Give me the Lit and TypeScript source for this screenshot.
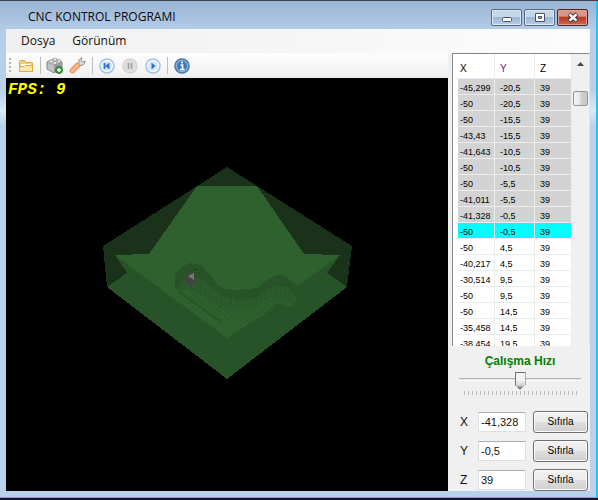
import { LitElement, html, css, svg } from "lit";
import { customElement, property } from "lit/decorators.js";
import { classMap } from "lit/directives/class-map.js";

const rows: [string, string, string][] = [
  ["-45,299", "-20,5", "39"],
  ["-50", "-20,5", "39"],
  ["-50", "-15,5", "39"],
  ["-43,43", "-15,5", "39"],
  ["-41,643", "-10,5", "39"],
  ["-50", "-10,5", "39"],
  ["-50", "-5,5", "39"],
  ["-41,011", "-5,5", "39"],
  ["-41,328", "-0,5", "39"],
  ["-50", "-0,5", "39"],
  ["-50", "4,5", "39"],
  ["-40,217", "4,5", "39"],
  ["-30,514", "9,5", "39"],
  ["-50", "9,5", "39"],
  ["-50", "14,5", "39"],
  ["-35,458", "14,5", "39"],
  ["-38,454", "19,5", "39"],
];
const activeRow = 9;

@customElement("title-bar")
class TitleBar extends LitElement {
  static styles = css`
    :host {
      display: flex;
      align-items: flex-start;
      height: 28px;
      padding: 0 8px 0 28px;
      box-sizing: border-box;
      font: 12px/16px "Open Sans", "Noto Sans", sans-serif;
      color: #0a0a14;
    }
    .title { flex: 1; margin: 0; padding-top: 8px; font: inherit; white-space: nowrap; }
    .buttons { display: flex; gap: 2px; padding-top: 8px; }
    button {
      width: 31px;
      height: 17px;
      padding: 0;
      box-sizing: border-box;
      border: 1px solid #566b87;
      border-radius: 2px;
      box-shadow: inset 0 0 0 1px #dbe7f5;
      background: linear-gradient(#c6d7ea 0 45%, #9db6d3 50%, #b5cde8);
      display: flex;
      align-items: center;
      justify-content: center;
    }
    .close {
      border-color: #55211f;
      box-shadow: inset 0 0 0 1px #dc9f94;
      background: linear-gradient(#d99689 0 40%, #b83a23 50%, #cb6a50);
    }
  `;
  render() {
    return html`
      <h1 class="title">CNC KONTROL PROGRAMI</h1>
      <div class="buttons">
        <button aria-label="Minimize">
          <svg width="14" height="11"><rect x="2.500" y="5.500" width="9" height="4" rx="1" fill="#fff" stroke="#4d5260" /></svg>
        </button>
        <button aria-label="Maximize">
          <svg width="14" height="11"><path d="M2.500 1.500h9v8h-9z" fill="#fff" stroke="#4d5260" /><path d="M5.500 4.500h3v2h-3z" fill="#9db6d3" stroke="#4d5260" /></svg>
        </button>
        <button class="close" aria-label="Close">
          <svg width="14" height="11"><path d="M3 2l8 7M11 2l-8 7" stroke="#4a3a45" stroke-width="4.500" /><path d="M3.500 2.400l7 6.200M10.500 2.400l-7 6.200" stroke="#fff" stroke-width="2.400" /></svg>
        </button>
      </div>
    `;
  }
}

@customElement("tool-bar")
class ToolBar extends LitElement {
  static styles = css`
    :host {
      display: flex;
      align-items: center;
      height: 25px;
      padding-left: 3px;
      box-sizing: border-box;
      background: linear-gradient(#fdfdfd, #f3f3f3 80%, #ececec);
    }
    button { width: 23px; height: 22px; padding: 0; border: 0; background: none; display: flex; align-items: center; justify-content: center; }
    .grip { width: 2px; height: 15px; margin-right: 3px; background: repeating-linear-gradient(#b4b4b4 0 2px, transparent 2px 4px); }
    .sep { width: 1px; height: 17px; margin: 0 2px 0 3px; background: #bdbdbd; }
  `;
  private round(edge: string, ring: string, core: string, inner: unknown) {
    return html`<svg width="16" height="16" viewBox="0 0 16 16">
      <circle cx="8" cy="8" r="7" fill=${ring} stroke=${edge} stroke-width="1.600" />
      <circle cx="8" cy="8" r="5" fill=${core} />
      ${inner}
    </svg>`;
  }
  render() {
    return html`
      <span class="grip"></span>
      <button aria-label="Open">
        <svg width="16" height="16" viewBox="0 0 16 16">
          <path d="M1.500 13.500v-10q0-1 1-1h4l1.500 2h5.500q1 0 1 1v8z" fill="#f4cf7c" stroke="#d9a441" />
          <path d="M3 6h9.500v3H3z" fill="#fff" />
          <path d="M1.500 13.500v-5h5l1-1h7v6z" fill="#fbe6a8" stroke="#dfac4c" />
        </svg>
      </button>
      <span class="sep"></span>
      <button aria-label="Add part">
        <svg width="18" height="18" viewBox="0 0 18 18">
          <path d="M1 5l7-3 8 3v6l-8 5-7-4z" fill="#c2c2c2" stroke="#858585" />
          <path d="M1 5l7 3 8-3-8-3z" fill="#e4e4e4" stroke="#8a8a8a" stroke-width=".6" />
          <path d="M8 8l8-3v6l-8 5z" fill="#9c9c9c" />
          <g fill="#eee" stroke="#858585" stroke-width=".7"><ellipse cx="5" cy="4.500" rx="2" ry="1.500" /><ellipse cx="9" cy="2.500" rx="2" ry="1.500" /><ellipse cx="9" cy="6" rx="2" ry="1.500" /><ellipse cx="13" cy="4" rx="2" ry="1.500" /></g>
          <circle cx="13" cy="13" r="3.500" fill="#37953c" stroke="#2b7a33" />
          <path d="M13 11v4M11 13h4" stroke="#fff" stroke-width="1.400" />
        </svg>
      </button>
      <button aria-label="Settings">
        <svg width="17" height="17" viewBox="0 0 17 17">
          <path d="M8 8l2-2.500Q9 2 13 .8l-1 3L13.500 5l2.500-1q0 4.500-5 4.500L9.500 10z" fill="#dedede" stroke="#858585" stroke-width=".9" />
          <path d="M3.500 13.500l5-5" stroke="#ea8a52" stroke-width="5.500" stroke-linecap="round" />
          <path d="M3.500 13.500l5-5" stroke="#ffb48a" stroke-width="3.800" stroke-linecap="round" />
        </svg>
      </button>
      <span class="sep"></span>
      <button aria-label="Rewind">
        ${this.round("#a3c1e6", "#f7fbff", "#d8e7f8", svg`<path d="M5.500 5v6" stroke="#2f74c2" stroke-width="1.800" /><path d="M6 8l4.500-3.500v7z" fill="#2f74c2" />`)}
      </button>
      <button aria-label="Pause">
        ${this.round("#d4d4d4", "#e2e2e2", "#dcdcdc", svg`<path d="M6.500 5v6M9.500 5v6" stroke="#a2a2a2" stroke-width="1.600" />`)}
      </button>
      <button aria-label="Play">
        ${this.round("#a3c1e6", "#f7fbff", "#d8e7f8", svg`<path d="M6.500 4.500L10.500 8l-4 3.500z" fill="#2f74c2" />`)}
      </button>
      <span class="sep"></span>
      <button aria-label="Info">
        ${this.round("#4a78b0", "#8fb3dc", "#3f78ba", svg`<path d="M8 3.500v2M6.500 7H8.500v4M6 11.500h4.500" stroke="#fff" stroke-width="1.700" fill="none" />`)}
      </button>
    `;
  }
}

@customElement("work-view")
class WorkView extends LitElement {
  static styles = css`
    :host { display: block; position: relative; background: #000; overflow: hidden; }
    .fps {
      position: absolute;
      left: 2px;
      top: 3px;
      font: italic bold 16px/18px "Liberation Mono", "DejaVu Sans Mono", monospace;
      color: #ff0;
      white-space: pre;
    }
    .scene { display: block; margin: 0 auto; }
  `;
  render() {
    return html`
      <span class="fps">FPS: 9</span>
      <svg class="scene" width="442" height="413" viewBox="6 78 442 413" shape-rendering="crispEdges">
        <defs>
          <pattern id="sparse" width="7" height="6" patternUnits="userSpaceOnUse">
            <path d="M1 0h1v1h-1zM4 1h2v1h-2zM2 2h1v1h-1zM6 3h1v1h-1zM0 4h1v1h-1zM3 5h1v1h-1z" fill="#285228" />
          </pattern>
          <pattern id="dense" width="5" height="4" patternUnits="userSpaceOnUse">
            <path d="M0 0h1v1h-1zM2 0h2v1h-2zM1 1h1v1h-1zM4 1h1v1h-1zM0 2h2v1h-2zM3 2h1v1h-1zM1 3h1v1h-1zM4 3h1v1h-1z" fill="#285228" />
          </pattern>
        </defs>
        <path d="M227 167L352 246L347 287L107 287L103 246z" fill="#1a3219" />
        <path d="M107 287L127 273L115 255H340L327 273L347 287L227 379z" fill="#285228" />
        <path d="M197 186H257L304 254L340 255L227 338L115 255L149 254z" fill="#2f612f" />
        <path d="M175 288V274L182 267L190 263L200 265L211 275L217 285L225 289L237 290L257 288L266 281L276 275H283L298 286L227 338L223 325L178 291z" fill="#285228" />
        <path d="M178 287L184 280L196 277L206 281L213 290L226 297L240 300L256 298L266 292L276 286L286 287L297 297L295 303L290 307L282 304L276 304L262 316L247 325L227 338L217 331L222 323L178 291z" fill="#2f612f" />
        <path d="M178 287L184 280L196 277L206 281L213 290L226 297L240 300L256 298L266 292L276 286L286 287L297 297L294 304L270 297L256 308L236 309L220 308L204 296L190 289L179 291z" fill="url(#dense)" />
        <path d="M190 289L204 296L220 308L236 309L256 308L270 297L294 304L290 307L276 304L248 325L224 322L190 299z" fill="url(#sparse)" />
        <path d="M178 291L222 323" stroke="#285228" stroke-width="2" />
        <path d="M189 273L194 273L195 284L190 286L186 282z" fill="#454145" />
        <path d="M188 276L194 273V280z" fill="#777477" />
        <path d="M195 269h1v1h-1z" fill="#000" />
      </svg>
    `;
  }
}

@customElement("point-list")
class PointList extends LitElement {
  static styles = css`
    :host {
      display: flex;
      height: 293px;
      box-sizing: border-box;
      overflow: hidden;
      border: 1px solid #828790;
      border-right-color: #e3e3e3;
      border-bottom: 0;
      background: #fff;
      font: 9px/12px "Liberation Sans", Arial, sans-serif;
      color: #000;
    }
    table { flex: 1; border-collapse: separate; border-spacing: 0; table-layout: fixed; align-self: flex-start; margin-left: 2px; }
    th, td { padding: 3px 0 0 5px; border: 0 solid #ececec; border-width: 0 1px 1px 0; text-align: left; font-weight: normal; white-space: nowrap; }
    th { height: 25px; padding-top: 5px; box-sizing: border-box; font-size: 10px; line-height: 18px; }
    .y { color: #7a2082; }
    .edge { width: 3px; padding: 0; border-right: 0; }
    .x { width: 37px; padding-left: 2px; }
    .mid { width: 40px; }
    .x, .mid { box-sizing: border-box; }
    .done { background: #d3d3d3; }
    .active { background: #0ff; }
    .scroll { width: 17px; display: flex; flex-direction: column; align-items: center; background: #f0f0f0; }
    .up { width: 17px; height: 20px; padding: 0; border: 0; background: none; display: flex; align-items: center; justify-content: center; }
    .thumb { width: 15px; height: 15px; margin-top: 17px; box-sizing: border-box; border: 1px solid #969696; border-radius: 2px; background: linear-gradient(90deg, #f5f5f5, #e6e6e6 45%, #cfcfcf 55%, #c6c6c9); }
  `;
  render() {
    return html`
      <table>
        <thead>
          <tr><th class="edge"></th><th class="x">X</th><th class="y mid">Y</th><th>Z</th></tr>
        </thead>
        <tbody>
          ${rows.map((r, i) => {
            const c = { done: i < activeRow, active: i === activeRow };
            return html`<tr>
              <td class="edge"></td>
              <td class=${classMap({ ...c, x: true })}>${r[0]}</td>
              <td class=${classMap({ ...c, mid: true })}>${r[1]}</td>
              <td class=${classMap(c)}>${r[2]}</td>
            </tr>`;
          })}
        </tbody>
      </table>
      <div class="scroll">
        <button class="up" aria-label="Scroll up"><svg width="7" height="4"><path d="M0 4L3.500 0L7 4z" fill="#444" /></svg></button>
        <div class="thumb"></div>
      </div>
    `;
  }
}

@customElement("axis-field")
class AxisField extends LitElement {
  @property() axis = "X";
  @property() value = "";
  static styles = css`
    :host { display: flex; align-items: center; height: 29px; font: 12px/16px "Liberation Sans", Arial, sans-serif; color: #111; }
    label { width: 18px; }
    input { width: 48px; height: 20px; box-sizing: border-box; padding: 0 2px; border: 1px solid #dcdfe6; border-top-color: #abadb3; border-radius: 1px; background: #fff; font-family: inherit; font-size: 11px; color: inherit; outline: 0; }
    button {
      width: 55px;
      height: 22px;
      margin-left: 7px;
      padding: 0;
      box-sizing: border-box;
      border: 1px solid #707070;
      border-radius: 3px;
      box-shadow: inset 0 0 0 1px #fafafa;
      background: linear-gradient(#f2f2f2, #ebebeb 48%, #dddddd 52%, #cfcfcf);
      font: 10px/14px "Liberation Sans", Arial, sans-serif;
      color: #000;
    }
  `;
  render() {
    return html`
      <label for="v">${this.axis}</label>
      <input id="v" .value=${this.value} />
      <button>Sıfırla</button>
    `;
  }
}

@customElement("app-root")
class AppRoot extends LitElement {
  static styles = css`
    :host {
      display: flex;
      flex-direction: column;
      height: 100vh;
      box-sizing: border-box;
      overflow: hidden;
      border-top: 1px solid #3a4654;
      border-bottom: 2px solid #0b1a20;
      background: #b9d1ea;
    }
    .window {
      flex: 1;
      min-height: 0;
      display: flex;
      flex-direction: column;
      border-right: 2px solid #21c3e6;
      border-bottom: 1px solid #35c6dc;
      background: linear-gradient(#99b4d3, #b5cde8 30px, #b9d1ea 90px, #dce9f6 110px, #b9d1ea 125px);
    }
    .client { flex: 1; min-height: 0; margin: 0 6px 6px; display: flex; flex-direction: column; background: #f0f0f0; }
    .menu {
      display: flex;
      gap: 17px;
      height: 24px;
      padding-left: 15px;
      background: linear-gradient(90deg, #f0f0f0, #fcfcfc);
      font: 12px/24px "Open Sans", "Noto Sans", sans-serif;
    }
    .menu a { color: #111; text-decoration: none; }
    .body { flex: 1; min-height: 0; display: flex; }
    .left { flex: 1; min-width: 0; display: flex; flex-direction: column; }
    work-view { flex: 1; }
    .side { width: 142px; display: flex; flex-direction: column; overflow: hidden; }
    point-list { margin-left: 4px; flex: none; }
    .speed { display: flex; flex-direction: column; align-items: center; height: 61px; padding: 7px 0 0 2px; box-sizing: border-box; flex: none; }
    .speed label { font: bold 12px/16px "Liberation Sans", Arial, sans-serif; color: #008000; }
    .speed input { appearance: none; width: 122px; height: 19px; margin: 2px 0 0; background: linear-gradient(#b0b0b0, #b0b0b0) 0 7px / 100% 1px no-repeat, linear-gradient(#fff, #fff) 0 9px / 100% 1px no-repeat, linear-gradient(#e4e4e4, #e4e4e4) 0 8px / 100% 1px no-repeat; }
    .speed input::-webkit-slider-thumb {
      appearance: none;
      width: 11px;
      height: 18px;
      clip-path: polygon(1px 0, 10px 0, 11px 1px, 11px 13px, 6px 18px, 5px 18px, 0 13px, 0 1px);
      background: linear-gradient(#707070, #707070) 0 0 / 1px 100% no-repeat, linear-gradient(#707070, #707070) 100% 0 / 1px 100% no-repeat, linear-gradient(#707070, #707070) 0 0 / 100% 1px no-repeat, linear-gradient(#f3f3f3 0 45%, #d8d8d8 72%, #777 90%);
    }
    .ticks { width: 113px; height: 4px; margin-top: 1px; background: repeating-linear-gradient(90deg, #bcbcbc 0 1px, transparent 1px 4px); }
    .fields { display: flex; flex-direction: column; padding: 0 0 0 12px; }
    axis-field { flex: none; }
  `;
  render() {
    return html`
      <main class="window">
        <title-bar></title-bar>
        <div class="client">
          <nav class="menu"><a href="#dosya">Dosya</a><a href="#gorunum">Görünüm</a></nav>
          <div class="body">
            <div class="left">
              <tool-bar></tool-bar>
              <work-view></work-view>
            </div>
            <div class="side">
              <point-list></point-list>
              <div class="speed">
                <label for="speed">Çalışma Hızı</label>
                <input id="speed" type="range" min="0" max="30" value="15" />
                <div class="ticks"></div>
              </div>
              <div class="fields">
                <axis-field axis="X" value="-41,328"></axis-field>
                <axis-field axis="Y" value="-0,5"></axis-field>
                <axis-field axis="Z" value="39"></axis-field>
              </div>
            </div>
          </div>
        </div>
      </main>
    `;
  }
}
